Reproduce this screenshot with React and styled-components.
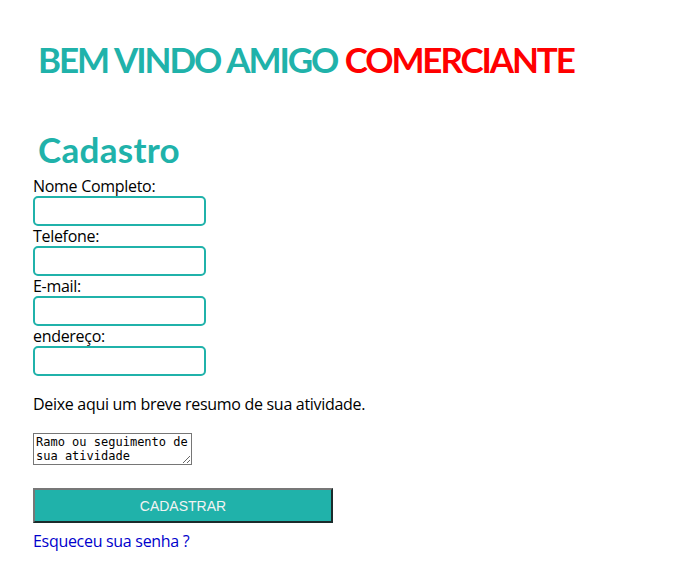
import React from 'react'
import styled, { createGlobalStyle } from 'styled-components'

const GlobalStyle = createGlobalStyle`
body {
    margin: 8px;
    background: #fff;
    font-family: "Open Sans", "DejaVu Sans", sans-serif;
    letter-spacing: -0.3px;
    color: #000;
}
`

const Page = styled.div`
padding: 0 25px;
`

const Title = styled.h1`
margin: 30px 0 0 5px;
font-family: Lato, "Open Sans", sans-serif;
font-size: 35px;
line-height: 42px;
font-weight: bold;
letter-spacing: -2.1px;
word-spacing: 1px;
color: #20b2aa;
`

const Highlight = styled.span`
color: #ff0000;
`

const SubTitle = styled.h2`
margin: 48px 0 0 5px;
font-family: Lato, "Open Sans", sans-serif;
font-size: 35px;
line-height: 42px;
font-weight: bold;
letter-spacing: 0.3px;
color: #20b2aa;
`

const Form = styled.form`
display: flex;
flex-direction: column;
align-items: flex-start;
margin-top: 6px;
`

const Label = styled.label`
display: block;
font-size: 16px;
line-height: 20px;
`

const Input = styled.input`
box-sizing: border-box;
width: 173px;
height: 30px;
border: 2px solid #20b2aa;
border-radius: 5px;
padding: 2px 6px;
font-size: 14px;
outline: none;
`

const Note = styled.p`
margin: 18px 0 0;
font-size: 16px;
line-height: 20px;
`

const Summary = styled.textarea`
box-sizing: border-box;
margin-top: 19px;
width: 159px;
height: 32px;
padding: 1px 2px;
border: 1px solid #767676;
font-family: "DejaVu Sans Mono", "Liberation Mono", monospace;
font-size: 12px;
line-height: 14px;
letter-spacing: 0;
color: #000;
`

const Button = styled.button`
box-sizing: border-box;
margin-top: 23px;
width: 300px;
height: 35px;
background: #20b2aa;
color: #f2f2f2;
font-family: "Liberation Sans", Arial, sans-serif;
font-size: 14px;
letter-spacing: 0;
border-style: solid;
border-width: 2px;
border-color: #777 #1b2b2b #1b2b2b #777;
cursor: pointer;
`

const ForgotLink = styled.a`
margin-top: 8px;
font-size: 16px;
line-height: 20px;
color: #0000cc;
text-decoration: none;
`

const fields = ['Nome Completo:', 'Telefone:', 'E-mail:', 'endereço:']

function App() {
    return (
        <Page>
            <GlobalStyle />
            <Title>
                BEM VINDO AMIGO <Highlight>COMERCIANTE</Highlight>
            </Title>
            <SubTitle>Cadastro</SubTitle>
            <Form onSubmit={e => e.preventDefault()}>
                {fields.map(name => (
                    <React.Fragment key={name}>
                        <Label>{name}</Label>
                        <Input type="text" />
                    </React.Fragment>
                ))}
                <Note>Deixe aqui um breve resumo de sua atividade.</Note>
                <Summary defaultValue="Ramo ou seguimento de sua atividade" />
                <Button type="submit">CADASTRAR</Button>
                <ForgotLink href="/#">Esqueceu sua senha ?</ForgotLink>
            </Form>
        </Page>
    )
}

export default App
